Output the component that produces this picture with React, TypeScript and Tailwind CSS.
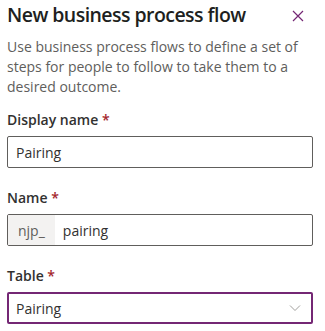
import React from "react";

function Label({ text }: { text: string }) {
  return (
    <label className="block text-[14px] font-semibold leading-[20px] text-[#323130]">
      {text} <span className="text-[#a4262c]">*</span>
    </label>
  );
}

export default function App() {
  return (
    <div
      className="h-[331px] w-[325px] overflow-hidden bg-white pl-[7px] pr-[12px]"
      style={{ fontFamily: '"Open Sans", "Noto Sans", sans-serif' }}
    >
      <div className="flex items-start justify-between pt-[1px]">
        <h1 className="text-[19.5px] font-semibold leading-[28px] tracking-[-0.55px] text-[#201f1e]">
          New business process flow
        </h1>
        <button
          type="button"
          aria-label="Close"
          className="mr-[9px] mt-[9px] text-[#742774]"
        >
          <svg width="12" height="12" viewBox="0 0 12 12" fill="none" stroke="currentColor" strokeWidth="1.2">
            <path d="M1 1 L11 11 M11 1 L1 11" />
          </svg>
        </button>
      </div>

      <p className="mt-[8px] text-[14px] leading-[20px] text-[#605e5c]">
        Use business process flows to define a set of steps for people to follow to take them to a desired outcome.
      </p>

      <div className="mt-[13px] flex flex-col gap-[6px]">
        <Label text="Display name" />
        <div className="flex h-[32px] items-center rounded-[2px] border border-[#605e5c] px-[8px] text-[14px] text-[#323130]">
          Pairing
        </div>
      </div>

      <div className="mt-[20px] flex flex-col gap-[6px]">
        <Label text="Name" />
        <div className="flex h-[32px] items-stretch overflow-hidden rounded-[2px] border border-[#605e5c] text-[14px]">
          <span className="flex items-center bg-[#f3f2f1] px-[10px] text-[#605e5c]">njp_</span>
          <span className="flex items-center px-[8px] text-[#323130]">pairing</span>
        </div>
      </div>

      <div className="mt-[20px] flex flex-col gap-[6px]">
        <Label text="Table" />
        <div className="flex h-[32px] items-center justify-between rounded-[2px] border-2 border-[#742774] pl-[7px] pr-[10px] text-[14px] text-[#323130]">
          <span>Pairing</span>
          <svg width="12" height="8" viewBox="0 0 12 8" fill="none" stroke="#a19f9d" strokeWidth="1">
            <path d="M1 1.5 L6 6.5 L11 1.5" />
          </svg>
        </div>
      </div>
    </div>
  );
}
